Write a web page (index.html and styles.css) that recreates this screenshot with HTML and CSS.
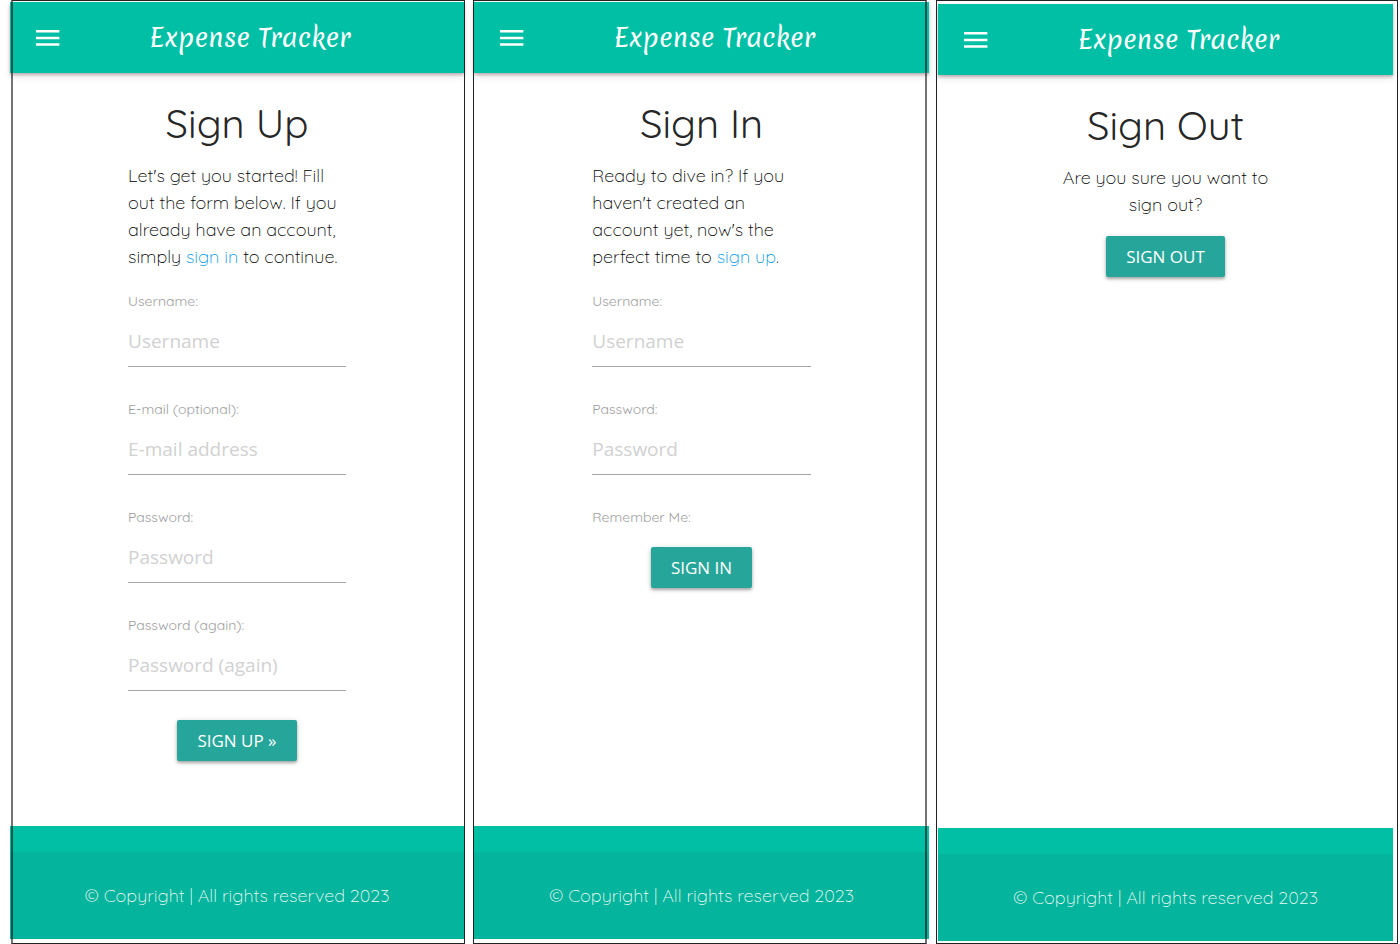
FILE: index.html
```html
<!DOCTYPE html>
<html lang="en">
<head>
<meta charset="utf-8">
<meta name="viewport" content="width=device-width, initial-scale=1">
<title>Expense Tracker</title>
<link rel="stylesheet" href="styles.css">
</head>
<body>
<div class="board">
  <section class="frame frame-up" id="signup">
    <div class="screen">
      <header class="topbar">
        <button class="menu" type="button" aria-label="Menu"><svg viewBox="0 0 24 16" width="24" height="16"><path d="M0 0h23.4v2.6H0zM0 6.7h23.4v2.6H0zM0 13.2h23.4v2.6H0z" fill="currentColor"/></svg></button>
        <span class="brand">Expense Tracker</span>
      </header>
      <main class="content">
        <h1 class="title">Sign Up</h1>
        <p class="intro">Let's get you started! Fill out the form below. If you already have an account, simply <a href="#signin">sign in</a> to continue.</p>
        <form class="form">
          <div class="field"><label for="up-user">Username:</label><input id="up-user" type="text" placeholder="Username"></div>
          <div class="field"><label for="up-mail">E-mail (optional):</label><input id="up-mail" type="email" placeholder="E-mail address"></div>
          <div class="field"><label for="up-pass">Password:</label><input id="up-pass" type="password" placeholder="Password"></div>
          <div class="field"><label for="up-again">Password (again):</label><input id="up-again" type="password" placeholder="Password (again)"></div>
          <button class="btn" type="submit">SIGN UP »</button>
        </form>
      </main>
      <footer class="footer"><p class="copyright">© Copyright | All rights reserved 2023</p></footer>
    </div>
  </section>

  <section class="frame frame-in" id="signin">
    <div class="screen">
      <header class="topbar">
        <button class="menu" type="button" aria-label="Menu"><svg viewBox="0 0 24 16" width="24" height="16"><path d="M0 0h23.4v2.6H0zM0 6.7h23.4v2.6H0zM0 13.2h23.4v2.6H0z" fill="currentColor"/></svg></button>
        <span class="brand">Expense Tracker</span>
      </header>
      <main class="content">
        <h1 class="title">Sign In</h1>
        <p class="intro">Ready to dive in? If you haven't created an account yet, now's the perfect time to <a href="#signup">sign up</a>.</p>
        <form class="form">
          <div class="field"><label for="in-user">Username:</label><input id="in-user" type="text" placeholder="Username"></div>
          <div class="field"><label for="in-pass">Password:</label><input id="in-pass" type="password" placeholder="Password"></div>
          <div class="remember"><label for="in-keep">Remember Me:</label><input id="in-keep" type="checkbox"></div>
          <button class="btn" type="submit">SIGN IN</button>
        </form>
      </main>
      <footer class="footer"><p class="copyright">© Copyright | All rights reserved 2023</p></footer>
    </div>
  </section>

  <section class="frame frame-out">
    <div class="screen">
      <header class="topbar">
        <button class="menu" type="button" aria-label="Menu"><svg viewBox="0 0 24 16" width="24" height="16"><path d="M0 0h23.4v2.6H0zM0 6.7h23.4v2.6H0zM0 13.2h23.4v2.6H0z" fill="currentColor"/></svg></button>
        <span class="brand">Expense Tracker</span>
      </header>
      <main class="content">
        <h1 class="title">Sign Out</h1>
        <p class="intro centered">Are you sure you want to sign out?</p>
        <form class="form confirm">
          <button class="btn" type="submit">SIGN OUT</button>
        </form>
      </main>
      <footer class="footer"><p class="copyright">© Copyright | All rights reserved 2023</p></footer>
    </div>
  </section>
</div>
</body>
</html>
```
FILE: styles.css
```css
* { box-sizing: border-box; }

body {
  margin: 0;
  background: #fff;
  color: #000;
  font-family: Quicksand, Lato, sans-serif;
  font-size: 18px;
  font-weight: 300;
  line-height: 27px;
}

.board {
  display: grid;
  grid-template-columns: 454fr 455fr 462fr;
  gap: 8px;
  min-height: 100vh;
  padding: 0 2px 0 11px;
}

.frame {
  position: relative;
  display: flex;
  flex-direction: column;
}

/* outline drawn over the screen it holds */
.frame::after {
  content: "";
  position: absolute;
  inset: 0;
  border: 1px solid #222;
  pointer-events: none;
}

.frame-up { padding: 2px 1px 5px 0; }
.frame-up .screen { margin-left: -1px; }
.frame-up::after { border-left: 2px solid rgba(0, 0, 0, 0.55); }

.frame-in { margin-right: 1px; padding: 2px 0 5px 1px; }
.frame-in .screen { margin-right: -2px; }
.frame-in::after { border-right: 2px solid rgba(0, 0, 0, 0.55); }

.frame-out { padding: 4px 5px 3px 2px; }

.screen {
  flex: 1;
  display: flex;
  flex-direction: column;
}

.topbar {
  display: flex;
  align-items: center;
  height: 71px;
  padding: 0 24px 0 26px;
  background: #00bfa5;
  color: #fff;
  box-shadow: 0 2px 3px rgba(60, 0, 20, 0.28), 0 4px 8px rgba(0, 0, 0, 0.08);
}

.menu {
  display: flex;
  padding: 0;
  border: 0;
  background: none;
  color: inherit;
}

.brand {
  flex: 1;
  text-align: center;
  font-family: Merienda, Lato, sans-serif;
  font-weight: 400;
  font-size: 25px;
  line-height: 40px;
}

.content {
  flex: 1;
  width: 48%;
  margin: 0 auto;
  padding-top: 28px;
}

.title {
  margin: 0 0 17px;
  color: rgba(0, 0, 0, 0.87);
  font-weight: 400;
  font-size: 40px;
  line-height: 44px;
  text-align: center;
  white-space: nowrap;
}

.intro { margin: 0; }
.centered { text-align: center; }

a { color: #039be5; text-decoration: none; }

.form {
  display: flex;
  flex-direction: column;
  align-items: center;
  padding-top: 20px;
}

.confirm { padding-top: 18px; }

.field {
  display: flex;
  flex-direction: column;
  width: 100%;
  margin-bottom: 31px;
}

label {
  color: #9e9e9e;
  font-weight: 400;
  font-size: 14px;
  line-height: 22px;
}

.field input {
  width: 100%;
  height: 48px;
  margin-top: 7px;
  padding: 0 0 4px;
  border: 0;
  border-bottom: 1px solid #a4a4a4;
  background: none;
  outline: none;
  font-family: "Segoe UI", "Open Sans", sans-serif;
  font-size: 19px;
}

.field input::placeholder { color: #d1d1d1; opacity: 1; }

.field + .btn { margin-top: -2px; }

.remember {
  position: relative;
  width: 100%;
  display: flex;
  margin-bottom: 19px;
}

.remember input {
  position: absolute;
  right: 0;
  opacity: 0;
}

.btn {
  height: 41px;
  padding: 0 20px;
  border: 0;
  border-radius: 2px;
  background: #26a69a;
  color: #fff;
  font-family: "Segoe UI", "Open Sans", sans-serif;
  font-size: 17px;
  white-space: nowrap;
  box-shadow: 0 2px 3px rgba(0, 0, 0, 0.28), 0 1px 6px rgba(0, 0, 0, 0.14);
}

.footer {
  padding-top: 26px;
  background: #00bfa5;
}

.copyright {
  margin: 0;
  padding: 30px 0;
  background: rgba(51, 51, 51, 0.08);
  color: rgba(255, 255, 255, 0.95);
  text-align: center;
  white-space: nowrap;
}
```
